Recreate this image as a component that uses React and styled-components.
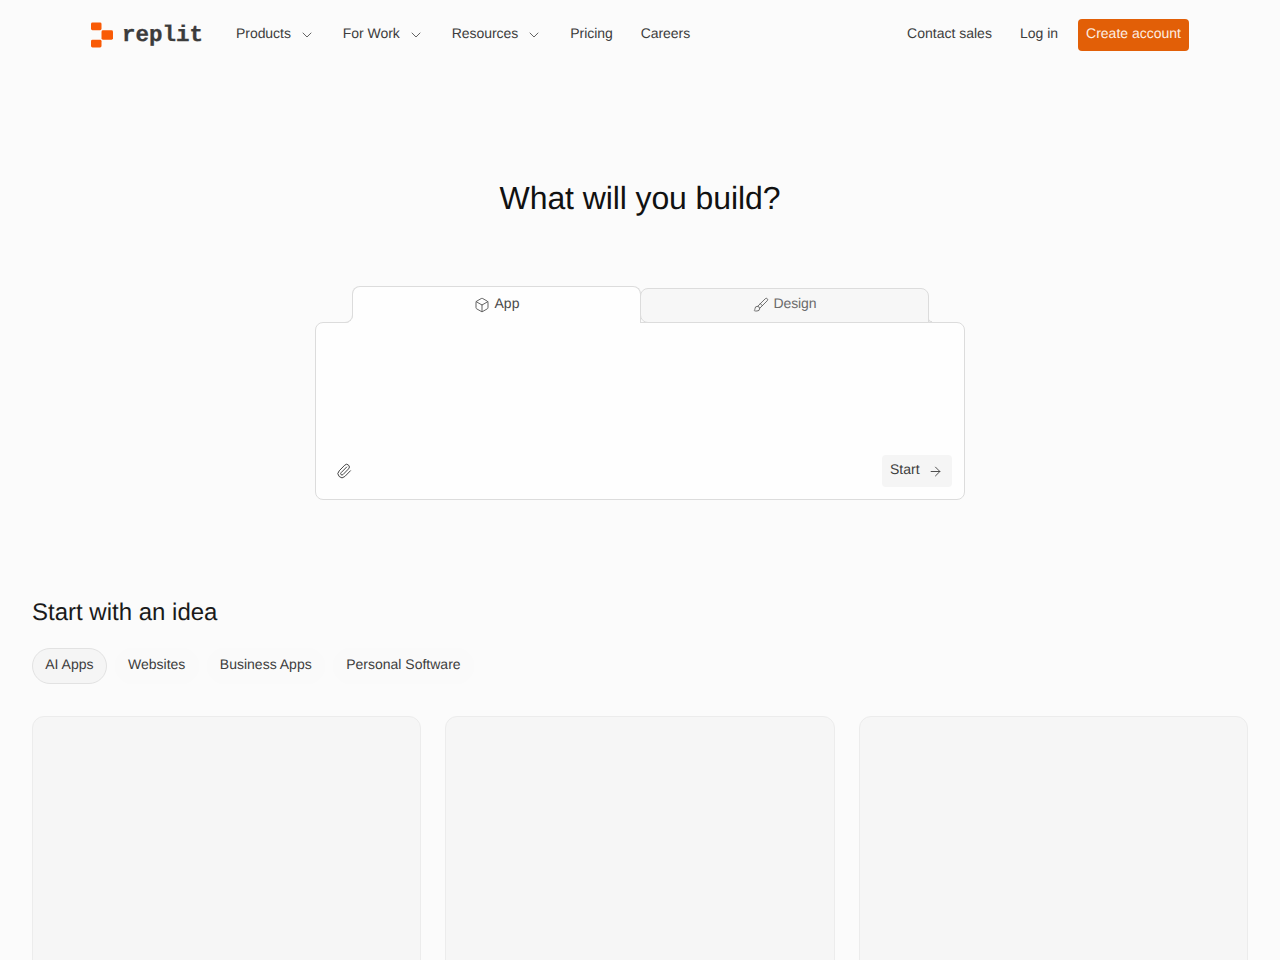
import React from "react";
import styled, { createGlobalStyle } from "styled-components";
import { Box, Brush, Paperclip, ArrowRight, ChevronDown } from "lucide-react";

const Global = createGlobalStyle`
  html, body { margin: 0; padding: 0; height: 960px; overflow: hidden; background: #fbfbfb; }
  body {
    font-family: "Liberation Sans", Arial, sans-serif;
    color: #3d3d3d;
    text-rendering: geometricPrecision;
    -webkit-font-smoothing: antialiased;
  }
  * { box-sizing: border-box; }
`;

const Page = styled.div`
  width: 1280px;
  height: 960px;
  overflow: hidden;
`;

const Nav = styled.nav`
  width: 1100px;
  height: 70px;
  margin: 0 auto;
  padding-right: 1px;
  display: flex;
  align-items: center;
  justify-content: space-between;
`;

const NavGroup = styled.div`
  display: flex;
  align-items: center;
  gap: ${(p) => p.$gap || 28}px;
`;

const Logo = styled.a`
  display: flex;
  align-items: center;
  gap: 9px;
  margin-left: 1px;
  margin-right: 5px;
  width: 112px;
`;

const LogoText = styled.span`
  font-family: "Liberation Mono", monospace;
  font-weight: 700;
  font-size: 22.5px;
  color: #3c3c3c;
  line-height: 26px;
  -webkit-text-stroke: 0.3px #3c3c3c;
`;

const NavLink = styled.a`
  display: flex;
  align-items: center;
  gap: 8px;
  font-size: 14px;
  line-height: 20px;
  padding-bottom: 4px;
  letter-spacing: ${(p) => (p.$tight ? "-0.05px" : "0")};
  color: #3d3d3d;
  svg { margin-top: 4px; color: #444; }
`;

const PrimaryButton = styled.a`
  display: block;
  height: 32px;
  padding: 4px 8px 8px;
  border-radius: 4px;
  background: #e25f07;
  color: #fdeee3;
  font-size: 14px;
  line-height: 20px;
`;

const Hero = styled.h1`
  margin: 108px 0 0;
  text-align: center;
  font-weight: 400;
  font-size: 32px;
  line-height: 40px;
  letter-spacing: -0.1px;
  color: #111;
`;

const Composer = styled.section`
  width: 650px;
  margin: 68px auto 0;
`;

const Tabs = styled.div`
  display: flex;
  align-items: flex-end;
  padding-left: 37px;
  position: relative;
  z-index: 1;
  margin-bottom: -1px;
`;

const AppTab = styled.div`
  position: relative;
  width: 289px;
  height: 37px;
  display: flex;
  align-items: center;
  justify-content: center;
  gap: 5px;
  padding-bottom: 4px;
  background: #fefefe;
  border: 1px solid #dcdcdc;
  border-bottom: none;
  border-radius: 8px 8px 0 0;
  font-size: 14px;
  color: #4a4a4a;
  svg { margin-top: 3px; color: #444; }
  &::before {
    content: "";
    position: absolute;
    left: -9px;
    bottom: 0;
    width: 8px;
    height: 8px;
    border-right: 1px solid #dcdcdc;
    border-bottom: 1px solid #dcdcdc;
    border-bottom-right-radius: 8px;
    box-shadow: 3px 3px 0 3px #fefefe;
    clip-path: inset(0 -4px -4px 0);
  }
`;

const DesignTab = styled.div`
  position: relative;
  width: 289px;
  height: 35px;
  margin-left: -1px;
  display: flex;
  align-items: center;
  justify-content: center;
  gap: 5px;
  padding-bottom: 5px;
  background: #f7f7f7;
  border: 1px solid #dcdcdc;
  border-radius: 8px 8px 0 8px;
  font-size: 14px;
  letter-spacing: -0.1px;
  color: #6b6b6b;
  svg { margin-top: 3px; color: #555; }
  &::after {
    content: "";
    position: absolute;
    right: -4px;
    bottom: 0;
    width: 3px;
    height: 3px;
    border-left: 1px solid #dcdcdc;
    border-bottom: 1px solid #dcdcdc;
    border-bottom-left-radius: 3px;
  }
`;

const InputBox = styled.div`
  height: 178px;
  display: flex;
  align-items: flex-end;
  justify-content: space-between;
  padding: 0 12px 12px 20px;
  background: #fefefe;
  border: 1px solid #dcdcdc;
  border-radius: 8px;
`;

const AttachIcon = styled.span`
  display: flex;
  height: 16px;
  margin-bottom: 8px;
  color: #444;
`;

const StartButton = styled.button`
  display: flex;
  align-items: center;
  gap: 8px;
  width: 70px;
  height: 32px;
  padding: 0 0 0 8px;
  border: none;
  border-radius: 4px;
  background: #f5f5f5;
  font-family: inherit;
  font-size: 14px;
  color: #3d3d3d;
  text-rendering: inherit;
  span { display: block; margin-top: -4px; }
  svg { color: #444; }
`;

const Ideas = styled.section`
  padding: 1px 32px 0;
  margin-top: 96px;
`;

const IdeasTitle = styled.h2`
  margin: 0;
  font-weight: 400;
  font-size: 24px;
  line-height: 32px;
  color: #1a1a1a;
`;

const Pills = styled.div`
  display: flex;
  gap: 8px;
  margin-top: 19px;
`;

const Pill = styled.button`
  height: 36px;
  padding: 0 12.25px 4px;
  border: 1px solid ${(p) => (p.$active ? "#e2e2e2" : "#fafafa")};
  border-radius: 18px;
  background: ${(p) => (p.$active ? "#f5f5f5" : "#fafafa")};
  font-family: inherit;
  font-size: 14px;
  color: #3d3d3d;
  text-rendering: inherit;
`;

const CardGrid = styled.div`
  display: grid;
  grid-template-columns: repeat(3, 1fr);
  gap: 24px;
  margin-top: 32px;
`;

const Card = styled.div`
  height: 300px;
  background: #f6f6f6;
  border: 1px solid #ececec;
  border-radius: 12px;
`;

const LogoMark = () => (
  <svg width="23" height="26" viewBox="0 0 23 26" fill="#f95a05">
    <rect x="0" y="0" width="11" height="8" rx="1.5" />
    <rect x="0" y="18" width="11" height="8" rx="1.5" />
    <rect x="11" y="8" width="12" height="10" rx="1.5" />
  </svg>
);

const ideas = ["AI Apps", "Websites", "Business Apps", "Personal Software"];
const navItems = [["Products", true], ["For Work", true], ["Resources", true], ["Pricing"], ["Careers"]];

export default function App() {
  return (
    <Page>
      <Global />
      <Nav>
        <NavGroup $gap={28}>
          <Logo>
            <LogoMark />
            <LogoText>replit</LogoText>
          </Logo>
          {navItems.map(([label, menu]) => (
            <NavLink key={label} $tight>
              {label}
              {menu && <ChevronDown size={16} strokeWidth={1.25} />}
            </NavLink>
          ))}
        </NavGroup>
        <NavGroup $gap={20}>
          <NavGroup $gap={28}>
            <NavLink>Contact sales</NavLink>
            <NavLink>Log in</NavLink>
          </NavGroup>
          <PrimaryButton>Create account</PrimaryButton>
        </NavGroup>
      </Nav>
      <Hero>What will you build?</Hero>
      <Composer>
        <Tabs>
          <AppTab>
            <Box size={16} strokeWidth={1.25} />
            App
          </AppTab>
          <DesignTab>
            <Brush size={16} strokeWidth={1.25} />
            Design
          </DesignTab>
        </Tabs>
        <InputBox>
          <AttachIcon>
            <Paperclip size={16} strokeWidth={1.5} />
          </AttachIcon>
          <StartButton>
            <span>Start</span>
            <ArrowRight size={15} strokeWidth={1.5} />
          </StartButton>
        </InputBox>
      </Composer>
      <Ideas>
        <IdeasTitle>Start with an idea</IdeasTitle>
        <Pills>
          {ideas.map((t, i) => (
            <Pill key={t} $active={i === 0}>{t}</Pill>
          ))}
        </Pills>
        <CardGrid>
          <Card />
          <Card />
          <Card />
        </CardGrid>
      </Ideas>
    </Page>
  );
}
